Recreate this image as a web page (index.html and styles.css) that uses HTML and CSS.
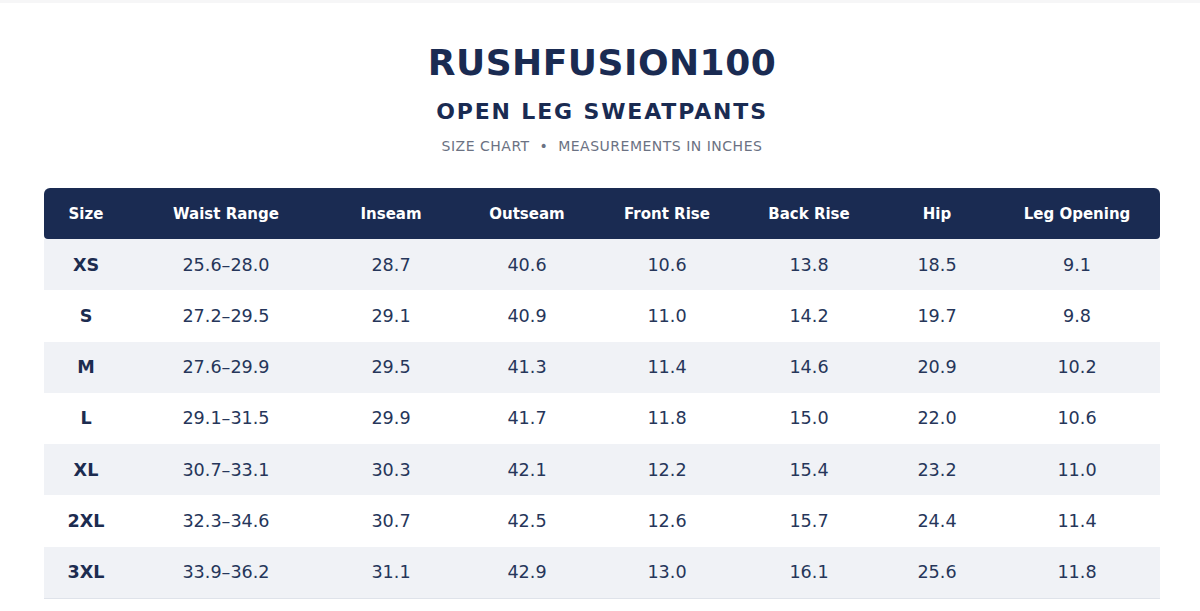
FILE: index.html
```html
<!DOCTYPE html>
<html lang="en">
<head>
<meta charset="utf-8">
<title>RUSHFUSION100 Size Chart</title>
<link rel="stylesheet" href="styles.css">
</head>
<body>
<div class="topbar"></div>
<main class="page">
  <header class="heading">
    <h1 class="brand">RUSHFUSION100</h1>
    <h2 class="product">OPEN LEG SWEATPANTS</h2>
    <p class="meta">SIZE CHART &nbsp;•&nbsp; MEASUREMENTS IN INCHES</p>
  </header>
  <table class="chart">
    <colgroup>
      <col class="c-size"><col class="c-waist"><col class="c-inseam"><col class="c-outseam"><col class="c-front"><col class="c-back"><col class="c-hip"><col class="c-leg">
    </colgroup>
    <thead>
      <tr>
        <th>Size</th><th>Waist Range</th><th>Inseam</th><th>Outseam</th><th>Front Rise</th><th>Back Rise</th><th>Hip</th><th>Leg Opening</th>
      </tr>
    </thead>
    <tbody>
      <tr><td class="size">XS</td><td>25.6–28.0</td><td>28.7</td><td>40.6</td><td>10.6</td><td>13.8</td><td>18.5</td><td>9.1</td></tr>
      <tr><td class="size">S</td><td>27.2–29.5</td><td>29.1</td><td>40.9</td><td>11.0</td><td>14.2</td><td>19.7</td><td>9.8</td></tr>
      <tr><td class="size">M</td><td>27.6–29.9</td><td>29.5</td><td>41.3</td><td>11.4</td><td>14.6</td><td>20.9</td><td>10.2</td></tr>
      <tr><td class="size">L</td><td>29.1–31.5</td><td>29.9</td><td>41.7</td><td>11.8</td><td>15.0</td><td>22.0</td><td>10.6</td></tr>
      <tr><td class="size">XL</td><td>30.7–33.1</td><td>30.3</td><td>42.1</td><td>12.2</td><td>15.4</td><td>23.2</td><td>11.0</td></tr>
      <tr><td class="size">2XL</td><td>32.3–34.6</td><td>30.7</td><td>42.5</td><td>12.6</td><td>15.7</td><td>24.4</td><td>11.4</td></tr>
      <tr><td class="size">3XL</td><td>33.9–36.2</td><td>31.1</td><td>42.9</td><td>13.0</td><td>16.1</td><td>25.6</td><td>11.8</td></tr>
    </tbody>
  </table>
</main>
</body>
</html>
```
FILE: styles.css
```css
html, body {
  margin: 0;
  padding: 0;
  background: #ffffff;
}
body {
  font-family: "DejaVu Sans", "Liberation Sans", sans-serif;
  color: #1c2c50;
}
.topbar {
  height: 3px;
  background: #f6f6f7;
}
.page {
  padding: 0 40px 0 44px;
}
.heading {
  text-align: center;
  padding-top: 38px;
}
.brand {
  margin: 0;
  font-size: 36px;
  font-weight: 700;
  line-height: 44px;
  color: #1a2b52;
  letter-spacing: 0.5px;
}
.product {
  margin: 12px 0 0;
  font-size: 22px;
  font-weight: 700;
  line-height: 30px;
  color: #1a2b52;
  letter-spacing: 1.85px;
}
.meta {
  margin: 9px 0 0;
  font-size: 14px;
  line-height: 20px;
  color: #6b7283;
  letter-spacing: 0.5px;
}
.chart {
  margin-top: 32px;
  width: 100%;
  table-layout: fixed;
  border-collapse: separate;
  border-spacing: 0;
}
.c-size { width: 84px; }
.c-waist { width: 196px; }
.c-inseam { width: 134px; }
.c-outseam { width: 138px; }
.c-front { width: 142px; }
.c-back { width: 142px; }
.c-hip { width: 114px; }
.c-leg { width: 166px; }
.chart th {
  background: #1a2b52;
  color: #ffffff;
  font-size: 15px;
  font-weight: 700;
  height: 51px;
  padding: 0;
  text-align: center;
}
.chart th:first-child {
  border-radius: 6px 0 0 4px;
}
.chart th:last-child {
  border-radius: 0 6px 4px 0;
}
.chart td {
  height: 51.25px;
  padding: 0;
  text-align: center;
  font-size: 17.6px;
  color: #26365a;
}
.chart td.size {
  font-weight: 700;
  color: #1c2c50;
}
.chart tbody tr:nth-child(odd) td {
  background: #f0f2f6;
}
.chart tbody tr:last-child td {
  border-bottom: 1px solid #dfe3ea;
}
```
